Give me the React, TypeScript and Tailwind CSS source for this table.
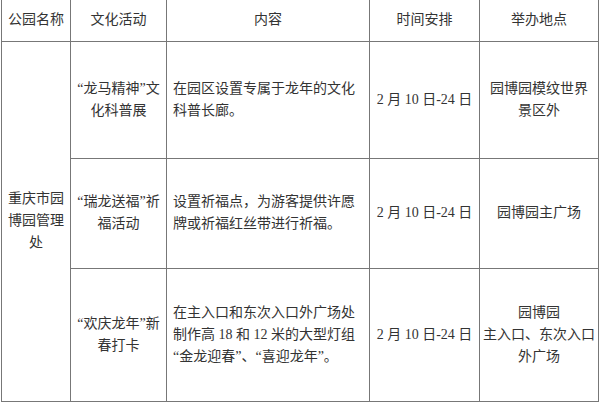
import React from "react";

const font = { fontFamily: '"Liberation Serif", "Noto Sans CJK SC", sans-serif' };

type Row = {
  activity: string[];
  content: string[];
  place: string[];
  height: string;
};

const rows: Row[] = [
  {
    activity: ["“龙马精神”文", "化科普展"],
    content: ["在园区设置专属于龙年的文化", "科普长廊。"],
    place: ["园博园模纹世界", "景区外"],
    height: "h-[117px]",
  },
  {
    activity: ["“瑞龙送福”祈", "福活动"],
    content: ["设置祈福点，为游客提供许愿", "牌或祈福红丝带进行祈福。"],
    place: ["园博园主广场"],
    height: "h-[110px]",
  },
  {
    activity: ["“欢庆龙年”新", "春打卡"],
    content: ["在主入口和东次入口外广场处", "制作高 18 和 12 米的大型灯组", "“金龙迎春”、“喜迎龙年”。"],
    place: ["园博园", "主入口、东次入口", "外广场"],
    height: "h-[133px]",
  },
];

function Lines({ lines }: { lines: string[] }) {
  return (
    <>
      {lines.map((l, i) => (
        <div key={i} className="whitespace-nowrap">
          {l}
        </div>
      ))}
    </>
  );
}

const cell = "border-[1.5px] border-[#777777] align-middle";

export default function App() {
  return (
    <div className="w-[600px] h-[404px] bg-white overflow-hidden pl-[1px]" style={font}>
      <table className="table-fixed border-collapse text-[14px] leading-[22px] text-[#333333] w-[597px]">
        <colgroup>
          <col className="w-[69px]" />
          <col className="w-[96px]" />
          <col className="w-[203px]" />
          <col className="w-[110px]" />
          <col className="w-[119px]" />
        </colgroup>
        <thead>
          <tr className="h-[41px]">
            {["公园名称", "文化活动", "内容", "时间安排", "举办地点"].map((h) => (
              <th key={h} className={`${cell} border-t-0 font-normal text-center`}>
                {h}
              </th>
            ))}
          </tr>
        </thead>
        <tbody>
          {rows.map((r, i) => (
            <tr key={i} className={r.height}>
              {i === 0 && (
                <td rowSpan={3} className={`${cell} text-center px-1`}>
                  <Lines lines={["重庆市园", "博园管理", "处"]} />
                </td>
              )}
              <td className={`${cell} text-center`}>
                <Lines lines={r.activity} />
              </td>
              <td className={`${cell} text-left pl-[6px]`}>
                <Lines lines={r.content} />
              </td>
              <td className={`${cell} text-center`}>
                <div className="whitespace-nowrap">2 月 10 日-24 日</div>
              </td>
              <td className={`${cell} text-center`}>
                <Lines lines={r.place} />
              </td>
            </tr>
          ))}
        </tbody>
      </table>
    </div>
  );
}
